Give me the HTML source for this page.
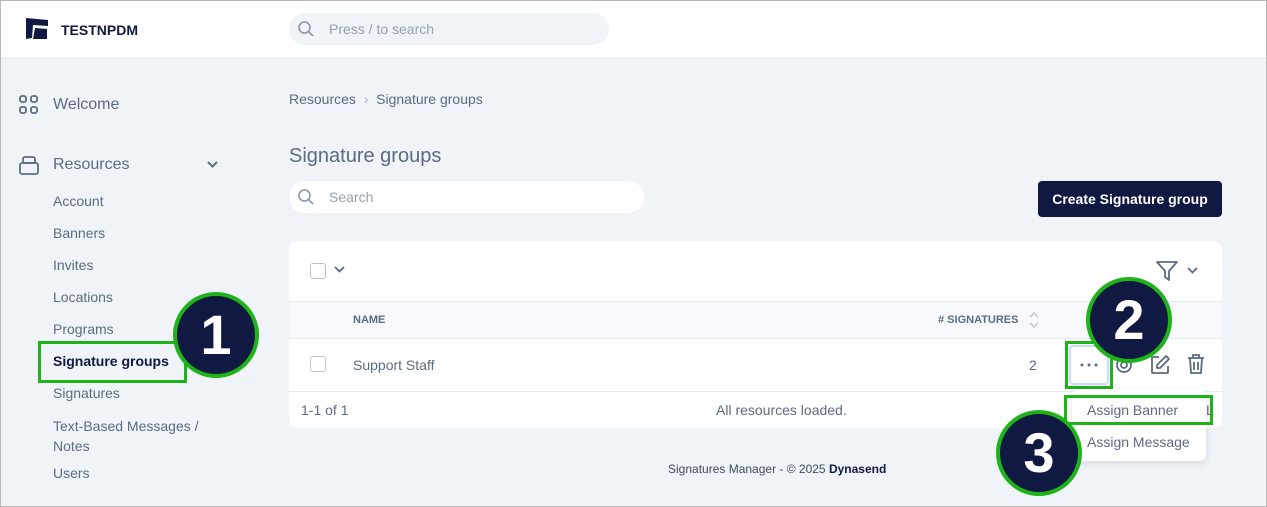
<!DOCTYPE html><html><head><style>
*{box-sizing:border-box;margin:0;padding:0}
body{width:1267px;height:507px;overflow:hidden;font-family:"Liberation Sans",sans-serif;background:#f0f4f9;position:relative;color:#5b6b82}
.a{position:absolute}
.frame{left:0;top:0;width:1267px;height:507px;border:1px solid #b8b8b8;pointer-events:none}
.hdr{left:0;top:0;width:1267px;height:57px;background:#fff}
.nav{font-size:14px;color:#5b6b82}
.circ{width:86px;height:86px;border-radius:50%;background:#0f1941;border:4px solid #1fb31a;color:#fff;font-weight:bold;font-size:56px;text-align:center;line-height:78px}
.gb{border:3px solid #1fb31a}
</style></head><body>
<div class="a hdr"></div>
<svg class="a" style="left:24px;top:17px" width="26" height="24" viewBox="0 0 26 24"><path d="M2 1 L24 3 L24 9 L9 8 L8 21 L2 22Z" fill="#0f1941"/><path d="M11 11 L23 12 L23 22 L9 22Z" fill="#0f1941"/></svg>
<div class="a" style="left:61px;top:22px;font-weight:bold;font-size:14px;color:#0f1941">TESTNPDM</div>
<div class="a" style="left:289px;top:13px;width:320px;height:32px;background:#f0f4f9;border-radius:16px"></div>
<svg class="a" style="left:297px;top:20px" width="18" height="18" viewBox="0 0 18 18" fill="none" stroke="#8a97aa" stroke-width="1.6"><circle cx="7.5" cy="7.5" r="5.5"/><path d="M11.5 11.5L16 16"/></svg>
<div class="a" style="left:329px;top:21px;font-size:14px;color:#94a0b2">Press / to search</div>
<svg class="a" style="left:19px;top:95px" width="20" height="20" viewBox="0 0 20 20" fill="none" stroke="#5b6b82" stroke-width="1.8"><rect x="1" y="1" width="6" height="6" rx="2"/><rect x="12" y="1" width="6" height="6" rx="2"/><rect x="1" y="12" width="6" height="6" rx="2"/><rect x="12" y="12" width="6" height="6" rx="2"/></svg>
<div class="a" style="left:53px;top:96px;font-size:16px">Welcome</div>
<svg class="a" style="left:19px;top:155px" width="20" height="20" viewBox="0 0 20 20" fill="none" stroke="#5b6b82" stroke-width="1.8"><rect x="1" y="8" width="18" height="11" rx="2"/><rect x="4" y="2" width="12" height="6" rx="2"/></svg>
<div class="a" style="left:53px;top:156px;font-size:16px">Resources</div>
<svg class="a" style="left:206px;top:160px" width="13" height="9" viewBox="0 0 13 9" fill="none" stroke="#5b6b82" stroke-width="2"><path d="M2 2l4.5 4.5L11 2"/></svg>
<div class="a nav" style="left:53px;top:193px">Account</div>
<div class="a nav" style="left:53px;top:225px">Banners</div>
<div class="a nav" style="left:53px;top:257px">Invites</div>
<div class="a nav" style="left:53px;top:289px">Locations</div>
<div class="a nav" style="left:53px;top:321px">Programs</div>
<div class="a gb" style="left:38px;top:341px;width:149px;height:42px"></div>
<div class="a nav" style="left:53px;top:353px;font-weight:bold;color:#0f1941">Signature groups</div>
<div class="a nav" style="left:53px;top:385px">Signatures</div>
<div class="a nav" style="left:53px;top:416px;line-height:20px">Text-Based Messages /<br>Notes</div>
<div class="a nav" style="left:53px;top:465px">Users</div>
<div class="a" style="left:289px;top:91px;font-size:14px;color:#5b6b82">Resources &nbsp;<span style="color:#aab4c3">›</span>&nbsp; Signature groups</div>
<div class="a" style="left:289px;top:145px;font-size:20px;color:#5b6b82">Signature groups</div>
<div class="a" style="left:289px;top:181px;width:355px;height:32px;background:#fff;border-radius:16px"></div>
<svg class="a" style="left:297px;top:188px" width="18" height="18" viewBox="0 0 18 18" fill="none" stroke="#8a97aa" stroke-width="1.6"><circle cx="7.5" cy="7.5" r="5.5"/><path d="M11.5 11.5L16 16"/></svg>
<div class="a" style="left:329px;top:189px;font-size:14px;color:#94a0b2">Search</div>
<div class="a" style="left:1038px;top:181px;width:184px;height:36px;background:#0f1941;border-radius:4px;color:#fff;font-weight:bold;font-size:14px;text-align:center;line-height:36px">Create Signature group</div>
<div class="a" style="left:289px;top:241px;width:933px;height:187px;background:#fff;border-radius:8px"></div>
<div class="a" style="left:310px;top:263px;width:16px;height:16px;border:1px solid #b9c2cf;border-radius:3px"></div>
<svg class="a" style="left:333px;top:265px" width="13" height="9" viewBox="0 0 13 9" fill="none" stroke="#5b6b82" stroke-width="1.8"><path d="M2 2l4.5 4.5L11 2"/></svg>
<svg class="a" style="left:1155px;top:260px" width="24" height="22" viewBox="0 0 24 22" fill="none" stroke="#5b6b82" stroke-width="1.8" stroke-linejoin="round"><path d="M2 2h20l-8 9v9l-4-3v-6Z"/></svg>
<svg class="a" style="left:1186px;top:266px" width="13" height="9" viewBox="0 0 13 9" fill="none" stroke="#5b6b82" stroke-width="1.8"><path d="M2 2l4.5 4.5L11 2"/></svg>
<div class="a" style="left:289px;top:301px;width:933px;height:38px;background:#f7f9fc;border-top:1px solid #e6eaf0;border-bottom:1px solid #e6eaf0"></div>
<div class="a" style="left:353px;top:314px;font-size:11px;font-weight:bold;color:#5b6b82">NAME</div>
<div class="a" style="left:938px;top:314px;font-size:11px;font-weight:bold;color:#5b6b82"># SIGNATURES</div>
<svg class="a" style="left:1028px;top:311px" width="12" height="18" viewBox="0 0 12 18" fill="none" stroke="#c4ccd8" stroke-width="1.6"><path d="M2 6l4-4 4 4M2 12l4 4 4-4"/></svg>
<div class="a" style="left:310px;top:356px;width:16px;height:16px;border:1px solid #b9c2cf;border-radius:3px"></div>
<div class="a" style="left:353px;top:357px;font-size:14px">Support Staff</div>
<div class="a" style="left:1029px;top:357px;font-size:14px">2</div>
<div class="a" style="left:289px;top:391px;width:933px;height:1px;background:#e6eaf0"></div>
<div class="a" style="left:1069px;top:345px;width:40px;height:40px;background:#fff;border:2px solid #bfe3f7;border-radius:4px"></div>
<svg class="a" style="left:1079px;top:363px" width="20" height="4"><circle cx="3" cy="2" r="1.5" fill="#5b6b82"/><circle cx="10" cy="2" r="1.5" fill="#5b6b82"/><circle cx="17" cy="2" r="1.5" fill="#5b6b82"/></svg>
<div class="a gb" style="left:1065px;top:341px;width:48px;height:48px"></div>
<svg class="a" style="left:1112px;top:354px" width="24" height="22" viewBox="0 0 24 22" fill="none" stroke="#5b6b82" stroke-width="1.8"><circle cx="12" cy="11" r="7"/><circle cx="12" cy="11" r="3"/></svg>
<svg class="a" style="left:1149px;top:354px" width="22" height="22" viewBox="0 0 22 22" fill="none" stroke="#5b6b82" stroke-width="1.8" stroke-linejoin="round"><path d="M10 3H3v16h16v-7"/><path d="M17 2l3 3-9 9H8v-3Z"/></svg>
<svg class="a" style="left:1186px;top:353px" width="20" height="22" viewBox="0 0 20 22" fill="none" stroke="#5b6b82" stroke-width="1.8"><path d="M2 5h16M7 5V2h6v3M4 5l1 15h10l1-15M8 9v8M12 9v8"/></svg>
<div class="a" style="left:301px;top:402px;font-size:14px">1-1 of 1</div>
<div class="a" style="left:716px;top:402px;font-size:14px">All resources loaded.</div>
<div class="a" style="left:1072px;top:389px;width:134px;height:72px;background:#fff;border-radius:6px;box-shadow:0 2px 8px rgba(0,0,0,.12)"></div>
<div class="a" style="left:1087px;top:402px;font-size:14px">Assign Banner</div>
<div class="a" style="left:1087px;top:434px;font-size:14px">Assign Message</div>
<div class="a" style="left:1206px;top:402px;font-size:14px">L</div>
<div class="a gb" style="left:1064px;top:395px;width:149px;height:30px"></div>
<div class="a" style="left:668px;top:462px;font-size:12px;color:#3d4a5c">Signatures Manager - © 2025 <b style="color:#0f1941">Dynasend</b></div>
<div class="a circ" style="left:173px;top:292px">1</div>
<div class="a circ" style="left:1086px;top:277px">2</div>
<div class="a circ" style="left:996px;top:410px">3</div>
<div class="a frame"></div>
</body></html>
